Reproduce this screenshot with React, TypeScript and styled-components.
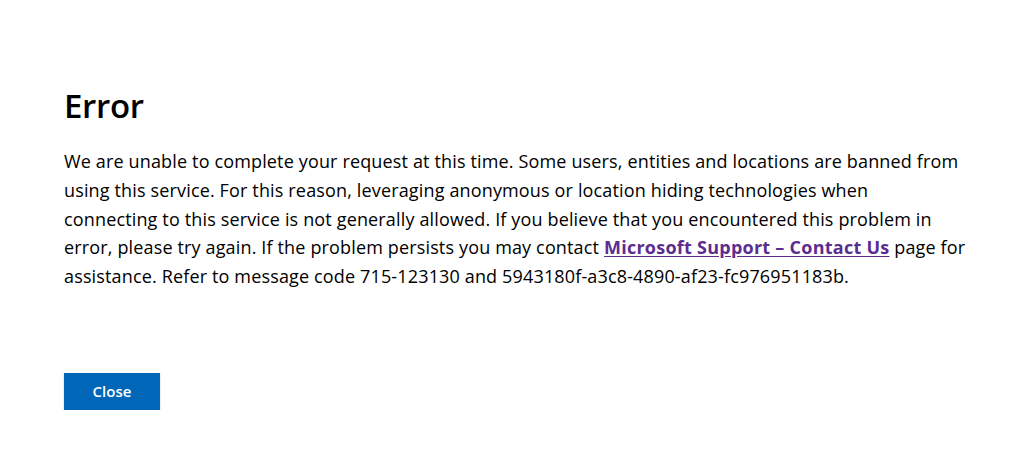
import React from "react";
import styled, { createGlobalStyle } from "styled-components";

const GlobalStyle = createGlobalStyle`
  html, body {
    margin: 0;
    padding: 0;
    background: #ffffff;
  }
  body {
    font-family: "Open Sans", "Noto Sans", "Liberation Sans", sans-serif;
    color: #000000;
  }
`;

const Page = styled.main`
  display: flex;
  flex-direction: column;
  align-items: flex-start;
  padding: 84px 0 0 64px;
`;

const Title = styled.h1`
  margin: 0;
  font-size: 33px;
  line-height: 44px;
  font-weight: 600;
  letter-spacing: -0.3px;
  color: #000000;
`;

const Message = styled.p`
  margin: 19px 0 0;
  width: 940px;
  font-size: 18px;
  line-height: 28.75px;
  font-weight: 400;
  letter-spacing: 0.15px;
  color: #000000;
`;

const SupportLink = styled.a`
  color: #5c2d91;
  font-weight: 700;
  letter-spacing: 0.25px;
  text-decoration: underline;
  text-underline-offset: 2px;
`;

const CloseButton = styled.button`
  margin-top: 82px;
  width: 96px;
  height: 37px;
  border: none;
  border-radius: 0;
  background: #0067b8;
  color: #ffffff;
  font-family: inherit;
  font-size: 15px;
  font-weight: 600;
  cursor: pointer;
  box-shadow: 0 1px 2px rgba(0, 0, 0, 0.2);
`;

export default function App() {
  return (
    <>
      <GlobalStyle />
      <Page>
        <Title>Error</Title>
        <Message>
          We are unable to complete your request at this time. Some users,
          entities and locations are banned from
          <br />
          using this service. For this reason, leveraging anonymous or location
          hiding technologies when
          <br />
          connecting to this service is not generally allowed. If you believe
          that you encountered this problem in
          <br />
          error, please try again. If the problem persists you may contact{" "}
          <SupportLink href="#">Microsoft Support – Contact Us</SupportLink>{" "}
          page for
          <br />
          assistance. Refer to message code 715-123130 and
          5943180f-a3c8-4890-af23-fc976951183b.
        </Message>
        <CloseButton type="button">Close</CloseButton>
      </Page>
    </>
  );
}
